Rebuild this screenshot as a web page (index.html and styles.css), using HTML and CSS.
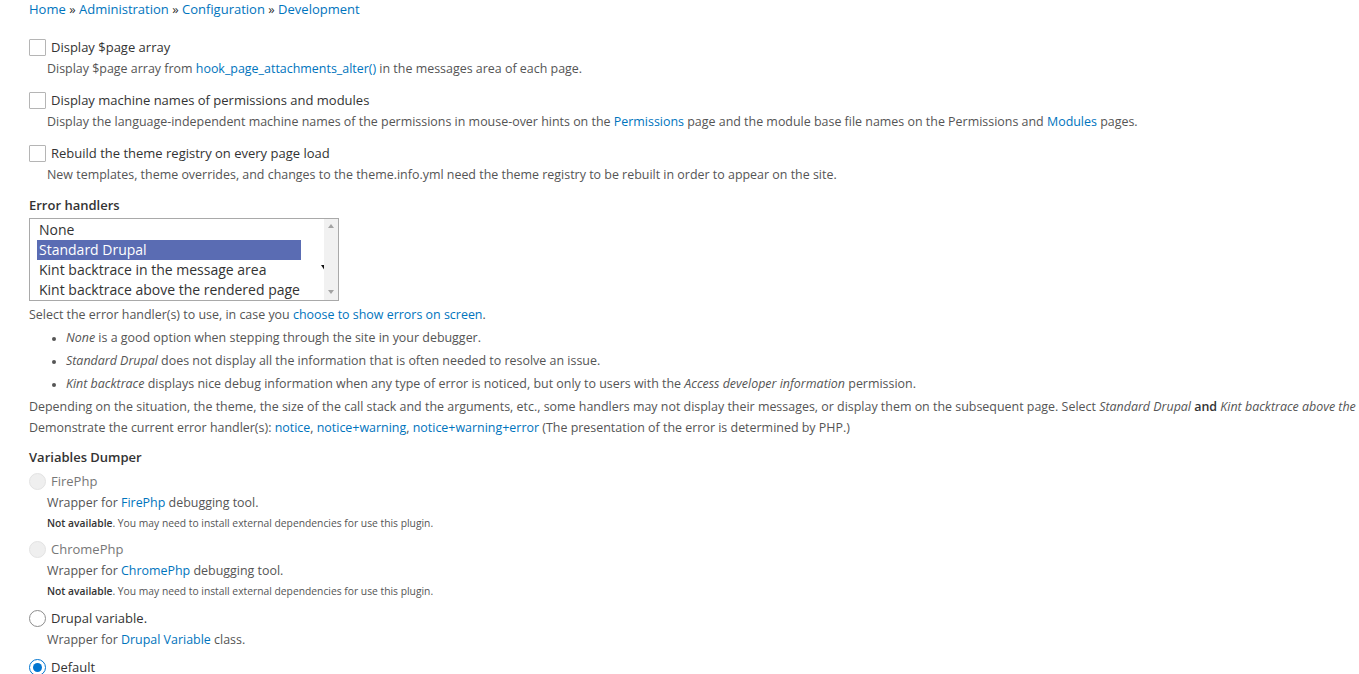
FILE: index.html
```html
<!DOCTYPE html>
<html lang="en">
<head>
<meta charset="utf-8">
<title>Devel settings</title>
<link rel="stylesheet" href="styles.css">
</head>
<body>
<div class="page">
  <nav class="breadcrumb"><a href="#">Home</a> » <a href="#">Administration</a> » <a href="#">Configuration</a> » <a href="#">Development</a></nav>

  <div class="check-item first">
    <div class="row"><span class="checkbox"></span><span class="label">Display $page array</span></div>
    <div class="desc">Display $page array from <a href="#">hook_page_attachments_alter()</a> in the messages area of each page.</div>
  </div>
  <div class="check-item">
    <div class="row"><span class="checkbox"></span><span class="label">Display machine names of permissions and modules</span></div>
    <div class="desc">Display the language-independent machine names of the permissions in mouse-over hints on the <a href="#">Permissions</a> page and the module base file names on the Permissions and <a href="#">Modules</a> pages.</div>
  </div>
  <div class="check-item">
    <div class="row"><span class="checkbox"></span><span class="label">Rebuild the theme registry on every page load</span></div>
    <div class="desc">New templates, theme overrides, and changes to the theme.info.yml need the theme registry to be rebuilt in order to appear on the site.</div>
  </div>

  <div class="heading eh">Error handlers</div>
  <div class="listbox">
    <div class="options">
      <div class="option">None</div>
      <div class="option selected">Standard Drupal</div>
      <div class="option">Kint backtrace in the message area</div>
      <div class="option">Kint backtrace above the rendered page</div>
    </div>
    <span class="cursor"></span>
    <div class="scrollbar"><span class="arrow up"></span><span class="arrow down"></span></div>
  </div>
  <div class="help">Select the error handler(s) to use, in case you <a href="#">choose to show errors on screen</a>.</div>
  <ul class="bullets">
    <li><em>None</em> is a good option when stepping through the site in your debugger.</li>
    <li><em>Standard Drupal</em> does not display all the information that is often needed to resolve an issue.</li>
    <li><em>Kint backtrace</em> displays nice debug information when any type of error is noticed, but only to users with the <em>Access developer information</em> permission.</li>
  </ul>
  <div class="clip">
    <p class="help para">Depending on the situation, the theme, the size of the call stack and the arguments, etc., some handlers may not display their messages, or display them on the subsequent page. Select <em>Standard Drupal</em> <strong>and</strong> <em>Kint backtrace above the rendered page</em> to maximize your chances of not missing any messages.</p>
    <p class="help para second">Demonstrate the current error handler(s): <a href="#">notice</a>, <a href="#">notice+warning</a>, <a href="#">notice+warning+error</a> (The presentation of the error is determined by PHP.)</p>
  </div>

  <div class="heading vd">Variables Dumper</div>
  <div class="radio-item first">
    <div class="row"><span class="radio disabled"></span><span class="label muted">FirePhp</span></div>
    <div class="desc">Wrapper for <a href="#">FirePhp</a> debugging tool.</div>
    <div class="small"><strong>Not available</strong>. You may need to install external dependencies for use this plugin.</div>
  </div>
  <div class="radio-item">
    <div class="row"><span class="radio disabled"></span><span class="label muted">ChromePhp</span></div>
    <div class="desc">Wrapper for <a href="#">ChromePhp</a> debugging tool.</div>
    <div class="small"><strong>Not available</strong>. You may need to install external dependencies for use this plugin.</div>
  </div>
  <div class="radio-item after-small">
    <div class="row"><span class="radio"></span><span class="label">Drupal variable.</span></div>
    <div class="desc">Wrapper for <a href="#">Drupal Variable</a> class.</div>
  </div>
  <div class="radio-item last">
    <div class="row"><span class="radio checked"></span><span class="label">Default</span></div>
  </div>
</div>
</body>
</html>
```

FILE: styles.css
```css
html {
  overflow: hidden;
}
body {
  margin: 0;
  font-family: "Open Sans", "Liberation Sans", sans-serif;
  font-size: 13px;
  color: #333;
  background: #fff;
}
a {
  color: #0074bd;
  text-decoration: none;
}
.page {
  padding-left: 29px;
}
.breadcrumb {
  line-height: 18px;
  color: #333;
}
.check-item {
  margin-top: 14px;
}
.check-item.first {
  margin-top: 21px;
}
.row {
  display: flex;
  align-items: center;
  height: 17px;
}
.checkbox {
  box-sizing: border-box;
  width: 17px;
  height: 17px;
  border: 1px solid #b5b5b5;
  border-radius: 1px;
  background: #fff;
  margin-right: 5px;
  flex: none;
}
.label {
  line-height: 17px;
  color: #333;
}
.desc {
  margin-top: 4px;
  margin-left: 18px;
  font-size: 12.45px;
  line-height: 18px;
  color: #555;
}
.heading {
  font-weight: 600;
  line-height: 18px;
  color: #333;
}
.heading.eh {
  margin-top: 12px;
}
.listbox {
  position: relative;
  box-sizing: border-box;
  width: 310px;
  height: 83px;
  margin-top: 4px;
  border: 1px solid #a9a9a9;
  background: #fff;
  display: flex;
}
.options {
  padding: 1px 0 0 7px;
  width: 264px;
}
.option {
  height: 20px;
  line-height: 20px;
  font-size: 14px;
  padding-left: 2px;
  color: #333;
  white-space: nowrap;
}
.option.selected {
  background: #5a6cb3;
  color: #fff;
}
.cursor {
  position: absolute;
  left: 291px;
  top: 46px;
  width: 4px;
  height: 5px;
  background: #111;
  clip-path: polygon(0 0, 100% 0, 85% 100%);
}
.scrollbar {
  position: absolute;
  right: 0;
  top: 0;
  bottom: 0;
  width: 14px;
  background: #f1f1f1;
}
.arrow {
  position: absolute;
  left: 4px;
  width: 0;
  height: 0;
  border-left: 3.5px solid transparent;
  border-right: 3.5px solid transparent;
}
.arrow.up {
  top: 5px;
  border-bottom: 4px solid #a3a3a3;
}
.arrow.down {
  bottom: 6px;
  border-top: 4px solid #a3a3a3;
}
.help {
  margin-top: 5px;
  font-size: 12.45px;
  line-height: 18px;
  color: #555;
}
.bullets {
  list-style: none;
  margin: 5px 0 0 0;
  padding: 0 0 0 37px;
}
.bullets li {
  position: relative;
  margin-top: 5px;
  font-size: 12.45px;
  line-height: 18px;
  color: #555;
}
.bullets li::before {
  content: "";
  position: absolute;
  left: -14px;
  top: 8px;
  width: 4px;
  height: 4px;
  border-radius: 50%;
  background: #555;
}
.clip {
  overflow: hidden;
}
.para {
  margin: 5px 0 0 0;
  white-space: nowrap;
}
.para.second {
  margin-top: 3px;
}
.para strong {
  font-weight: 600;
  color: #333;
}
.heading.vd {
  margin-top: 11px;
}
.radio-item {
  margin-top: 10px;
}
.radio-item.first {
  margin-top: 7px;
}
.radio-item.after-small {
  margin-top: 11px;
}
.radio {
  box-sizing: border-box;
  width: 17px;
  height: 17px;
  border: 1px solid #8d8d8d;
  border-radius: 50%;
  background: #fff;
  margin-right: 5px;
  flex: none;
  position: relative;
}
.radio.disabled {
  border-color: #e3e3e3;
  background: #efefef;
}
.radio.checked {
  border: 1px solid #0075d0;
}
.radio.checked::after {
  content: "";
  position: absolute;
  left: 3px;
  top: 3px;
  width: 9px;
  height: 9px;
  border-radius: 50%;
  background: #0075d0;
}
.muted {
  color: #777;
}
.small {
  margin-top: 4px;
  margin-left: 18px;
  font-size: 10.3px;
  line-height: 15px;
  color: #555;
}
.small strong {
  font-weight: 600;
  color: #333;
}
.radio-item.last {
  margin-top: 10px;
}
```
